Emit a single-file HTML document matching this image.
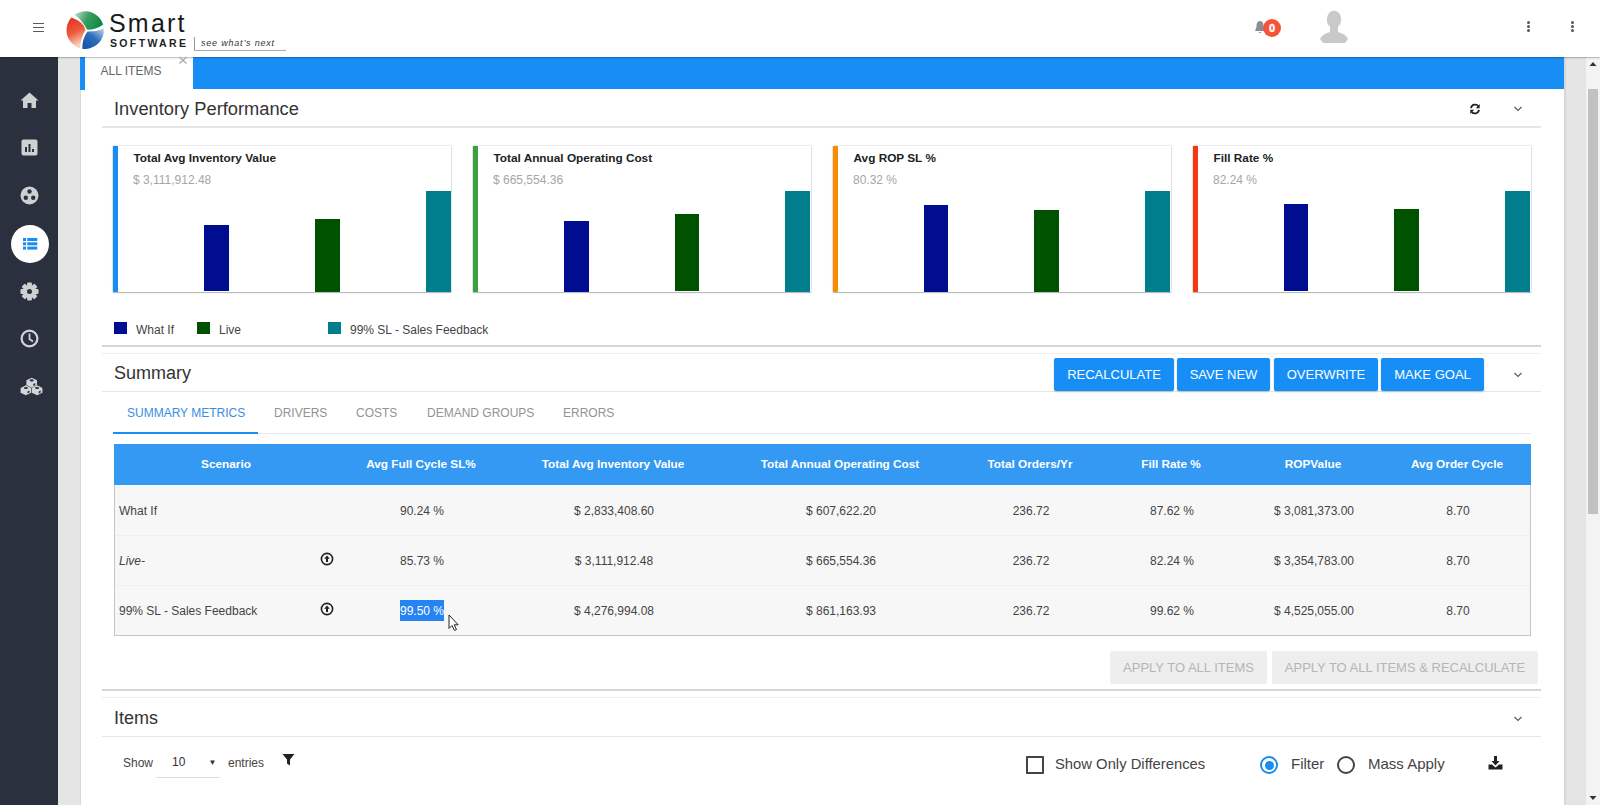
<!DOCTYPE html>
<html><head><meta charset="utf-8">
<style>
*{box-sizing:border-box;margin:0;padding:0}
html,body{width:1600px;height:805px;overflow:hidden;background:#fff;font-family:"Liberation Sans",sans-serif;color:#333}
.a{position:absolute}
#hdr{left:0;top:0;width:1600px;height:57px;background:#fff;box-shadow:0 0.5px 1.2px rgba(0,0,0,.28);z-index:5}
#side{left:0;top:57px;width:58px;height:748px;background:#2a303d}
#gut{left:58px;top:57px;width:22px;height:748px;background:#e5e5e5}
#gut2{left:1564px;top:57px;width:22px;height:748px;background:#e4e4e4;border-left:2px solid #d6d6d6}
#sb{left:1586px;top:57px;width:14px;height:748px;background:#f3f3f3}
#thumb{left:1588px;top:89px;width:10px;height:425px;background:#c1c1c1}
#panel{left:80px;top:57px;width:1484px;height:748px;background:#fff;border-left:1px solid #d8d8d8}
#tabbar{left:80px;top:57px;width:1484px;height:32.3px;background:#168ef6}
#tab{left:80px;top:57px;width:113px;height:33px;background:#fff;border-left:5px solid #168ef6}
.t{white-space:nowrap;line-height:1}
.hl{background:#e6e6e6;height:2px}
.card{top:146px;width:338px;height:146px;background:#fff;box-shadow:0 1px 1px rgba(0,0,0,.2),0 0 1.5px rgba(0,0,0,.32)}
.card .bd{left:0;top:0;width:4.6px;height:146px}
.card .ct{left:20.5px;top:6.5px;font-size:11.8px;font-weight:bold;color:#222}
.card .cv{left:20px;top:28px;font-size:12px;color:#a6a6a6}
.bar{width:24.5px}
.lg{top:322px;width:13px;height:12px}
.lgt{top:324px;font-size:12px;color:#444}
.btn{top:358px;height:33px;background:#168ef6;color:#fff;font-size:13px;border-radius:2px;text-align:center;line-height:33px;box-shadow:0 1px 2px rgba(0,0,0,.2)}
.tabt{top:407px;font-size:12px;color:#939393}
th,td{font-size:12px}
.hd{top:444px;height:41px;background:#3399f3}
.hdt{top:458.5px;font-size:11.8px;font-weight:bold;color:#fff;transform:translateX(-50%)}
.row{left:114px;width:1417px;height:50px;background:#f7f7f7}
.cell{font-size:12px;color:#444;transform:translateX(-50%)}
.abtn{top:651px;height:33px;background:#eeeeee;color:#b5b5b5;font-size:13px;line-height:33px;text-align:center;border-radius:2px}
</style></head><body>
<div id="side" class="a">
 <svg class="a" style="left:20px;top:35px" width="19" height="17" viewBox="0 0 19 17"><path d="M9.5,0.5 L18.5,8.5 L16,8.5 L16,16 L11.5,16 L11.5,11 L7.5,11 L7.5,16 L3,16 L3,8.5 L0.5,8.5 Z" fill="#cfd0d2"/></svg>
 <svg class="a" style="left:21px;top:82px" width="17" height="17" viewBox="0 0 17 17"><rect x="0.5" y="0.5" width="16" height="16" rx="2" fill="#cfd0d2"/><rect x="4" y="8" width="2" height="5" fill="#2a303d"/><rect x="7.5" y="5" width="2" height="8" fill="#2a303d"/><rect x="11" y="10" width="2" height="3" fill="#2a303d"/></svg>
 <svg class="a" style="left:20px;top:129px" width="19" height="19" viewBox="0 0 19 19"><circle cx="9.5" cy="9.5" r="9" fill="#cfd0d2"/><circle cx="9.5" cy="5.5" r="2.2" fill="#2a303d"/><circle cx="5.8" cy="11.8" r="2.2" fill="#2a303d"/><circle cx="13.2" cy="11.8" r="2.2" fill="#2a303d"/></svg>
 <div class="a" style="left:10.5px;top:168px;width:38px;height:38px;border-radius:50%;background:#fff"></div>
 <svg class="a" style="left:23px;top:180.5px" width="15" height="12" viewBox="0 0 15 12"><g fill="#1a8cf0"><rect x="0" y="0" width="3" height="3"/><rect x="4.3" y="0" width="10" height="3"/><rect x="0" y="4.3" width="3" height="3"/><rect x="4.3" y="4.3" width="10" height="3"/><rect x="0" y="8.6" width="3" height="3"/><rect x="4.3" y="8.6" width="10" height="3"/></g></svg>
 <svg class="a" style="left:20px;top:225px" width="19" height="19" viewBox="-9.5 -9.5 19 19"><g fill="#cfd0d2"><circle r="6.5"/><rect x="-2.4" y="-9" width="4.8" height="18" rx="1"/><rect x="-2.4" y="-9" width="4.8" height="18" rx="1" transform="rotate(45)"/><rect x="-2.4" y="-9" width="4.8" height="18" rx="1" transform="rotate(90)"/><rect x="-2.4" y="-9" width="4.8" height="18" rx="1" transform="rotate(135)"/></g><circle r="2.5" fill="#2a303d"/></svg>
 <svg class="a" style="left:20px;top:272px" width="19" height="19" viewBox="0 0 19 19"><circle cx="9.5" cy="9.5" r="7.9" fill="none" stroke="#d4d5d8" stroke-width="2.2"/><path d="M9.5,4.5 L9.5,10 L13,12.5" fill="none" stroke="#cfd0d2" stroke-width="1.8"/></svg>
 <svg class="a" style="left:20px;top:320px" width="23" height="20" viewBox="20 377 23 20"><path d="M31.7,377.7 L37.0,380.3 L37.0,385.09999999999997 L31.7,387.7 L26.4,385.09999999999997 L26.4,380.3 Z" fill="#d4d5d8"/><ellipse cx="31.7" cy="380.4" rx="2.1" ry="1.1" fill="#2a303d"/><path d="M33.3,383.9 L35.3,382.9 L35.3,384.9 L33.3,385.9 Z" fill="#2a303d"/><path d="M25.9,385.3 L31.2,387.90000000000003 L31.2,392.7 L25.9,395.3 L20.599999999999998,392.7 L20.599999999999998,387.90000000000003 Z" fill="#d4d5d8"/><ellipse cx="25.9" cy="388.0" rx="2.1" ry="1.1" fill="#2a303d"/><path d="M27.5,391.5 L29.5,390.5 L29.5,392.5 L27.5,393.5 Z" fill="#2a303d"/><path d="M37.1,385.3 L42.4,387.90000000000003 L42.4,392.7 L37.1,395.3 L31.8,392.7 L31.8,387.90000000000003 Z" fill="#d4d5d8"/><ellipse cx="37.1" cy="388.0" rx="2.1" ry="1.1" fill="#2a303d"/><path d="M38.7,391.5 L40.7,390.5 L40.7,392.5 L38.7,393.5 Z" fill="#2a303d"/></svg>
</div>
<div id="gut" class="a"></div>
<div id="panel" class="a"></div>
<div id="gut2" class="a"></div>
<div id="sb" class="a"></div>
<div id="thumb" class="a"></div>
<div id="tabbar" class="a"></div>
<div id="tab" class="a"></div>
<div class="a t" style="left:100.5px;top:64.5px;font-size:12px;color:#666">ALL ITEMS</div>
<svg class="a" style="left:178px;top:56px;z-index:6" width="10" height="9" viewBox="0 0 10 9"><path d="M1.5,1 L8.5,7.5 M8.5,1 L1.5,7.5" stroke="#b0b0b0" stroke-width="1.6"/></svg>

<div id="hdr" class="a">
 <div class="a" style="left:33px;top:22.6px;width:10.5px;height:1.7px;background:#5a5a5a"></div>
 <div class="a" style="left:33px;top:26.6px;width:10.5px;height:1.7px;background:#5a5a5a"></div>
 <div class="a" style="left:33px;top:30.6px;width:10.5px;height:1.7px;background:#5a5a5a"></div>
 <svg class="a" style="left:60px;top:5px" width="50" height="50" viewBox="60 5 50 50">
  <defs>
   <linearGradient id="gr" x1="0" y1="0" x2="0.3" y2="1"><stop offset="0" stop-color="#e42a20"/><stop offset="0.55" stop-color="#ec5a3a"/><stop offset="1" stop-color="#fbd0bd"/></linearGradient>
   <linearGradient id="gg" x1="0" y1="0" x2="1" y2="0.3"><stop offset="0" stop-color="#c9dccf"/><stop offset="0.5" stop-color="#3c9f63"/><stop offset="1" stop-color="#0f8a45"/></linearGradient>
   <linearGradient id="gb" x1="0.2" y1="1" x2="1" y2="0"><stop offset="0" stop-color="#1655a8"/><stop offset="0.5" stop-color="#2f6dbd"/><stop offset="1" stop-color="#c5d6ee"/></linearGradient>
  </defs>
  <path d="M71.5,17.5 Q84,22 85.5,30 Q80,39 80.5,48.3 A18.7,18.7 0 0 1 71.5,17.5 Z" fill="url(#gr)"/>
  <path d="M74.5,14.8 A18.7,18.7 0 0 1 103.2,24.5 Q95,30.5 87,29.5 Q82,20 74.5,14.8 Z" fill="url(#gg)"/>
  <path d="M103.8,28.5 A18.7,18.7 0 0 1 82.3,48.7 Q82,39 87.5,31.5 Q96,32 103.8,28.5 Z" fill="url(#gb)"/>
 </svg>
 <div class="a t" style="left:109px;top:11px;font-size:25px;letter-spacing:2.2px;color:#1a1a1a">Smart</div>
 <div class="a t" style="left:110px;top:38px;font-size:10.5px;font-weight:bold;letter-spacing:2.35px;color:#222">SOFTWARE</div>
 <div class="a" style="left:194px;top:37px;width:1px;height:14px;background:#999"></div>
 <div class="a" style="left:194px;top:50px;width:92px;height:1px;background:#aaa"></div>
 <div class="a t" style="left:201px;top:39px;font-size:9px;font-style:italic;letter-spacing:0.8px;color:#333">see what’s next</div>
 <svg class="a" style="left:1254px;top:20px" width="12" height="14" viewBox="0 0 12 14"><path d="M6,1 C3,1 2.5,4 2.5,7 L1,11 L11,11 L9.5,7 C9.5,4 9,1 6,1 Z M4.5,12 Q6,14 7.5,12 Z" fill="#8a8f96"/></svg>
 <div class="a" style="left:1263px;top:19px;width:18px;height:18px;border-radius:50%;background:#f4553a;color:#fff;font-size:11px;font-weight:bold;-webkit-text-stroke:0.4px #fff;text-align:center;line-height:18px">0</div>
 <svg class="a" style="left:1318px;top:10px" width="32" height="35" viewBox="0 0 32 35"><ellipse cx="16" cy="9.5" rx="7.2" ry="9" fill="#c9c9c9"/><path d="M12,17 L12,22 Q4,24 2,29 L5,33 L27,33 L30,29 Q28,24 20,22 L20,17 Z" fill="#c9c9c9"/></svg>
 <div class="a" style="left:1527px;top:21px;width:3px;height:3px;border-radius:50%;background:#555"></div>
 <div class="a" style="left:1527px;top:25px;width:3px;height:3px;border-radius:50%;background:#555"></div>
 <div class="a" style="left:1527px;top:29px;width:3px;height:3px;border-radius:50%;background:#555"></div>
 <div class="a" style="left:1571px;top:21px;width:3px;height:3px;border-radius:50%;background:#555"></div>
 <div class="a" style="left:1571px;top:25px;width:3px;height:3px;border-radius:50%;background:#555"></div>
 <div class="a" style="left:1571px;top:29px;width:3px;height:3px;border-radius:50%;background:#555"></div>
</div>

<!-- Inventory performance -->
<div class="a t" style="left:114px;top:99.8px;font-size:18.3px;color:#333">Inventory Performance</div>
<div class="a hl" style="left:102px;top:126px;width:1439px"></div>

<div class="a card" style="left:113px"><div class="a bd" style="background:#188df3"></div>
 <div class="a t ct">Total Avg Inventory Value</div><div class="a t cv">$ 3,111,912.48</div>
 <div class="a bar" style="left:91.3px;top:78.7px;height:66.8px;background:#000d91"></div>
 <div class="a bar" style="left:202.2px;top:72.5px;height:73.0px;background:#005100"></div>
 <div class="a bar" style="left:313.2px;top:45px;height:100.5px;background:#007e8d"></div>
</div>
<div class="a card" style="left:473px"><div class="a bd" style="background:#3c9f40"></div>
 <div class="a t ct">Total Annual Operating Cost</div><div class="a t cv">$ 665,554.36</div>
 <div class="a bar" style="left:91.3px;top:75px;height:70.5px;background:#000d91"></div>
 <div class="a bar" style="left:201.9px;top:67.7px;height:77.8px;background:#005100"></div>
 <div class="a bar" style="left:312.4px;top:45px;height:100.5px;background:#007e8d"></div>
</div>
<div class="a card" style="left:833px"><div class="a bd" style="background:#fb8c00"></div>
 <div class="a t ct">Avg ROP SL %</div><div class="a t cv">80.32 %</div>
 <div class="a bar" style="left:90.5px;top:58.5px;height:87.0px;background:#000d91"></div>
 <div class="a bar" style="left:201.4px;top:64px;height:81.5px;background:#005100"></div>
 <div class="a bar" style="left:312.4px;top:45px;height:100.5px;background:#007e8d"></div>
</div>
<div class="a card" style="left:1193px"><div class="a bd" style="background:#f5360f"></div>
 <div class="a t ct">Fill Rate %</div><div class="a t cv">82.24 %</div>
 <div class="a bar" style="left:90.5px;top:57.6px;height:87.9px;background:#000d91"></div>
 <div class="a bar" style="left:201.4px;top:63.2px;height:82.3px;background:#005100"></div>
 <div class="a bar" style="left:312.4px;top:45px;height:100.5px;background:#007e8d"></div>
</div>

<div class="a lg" style="left:114px;background:#000f91"></div><div class="a t lgt" style="left:136px">What If</div>
<div class="a lg" style="left:197px;background:#005000"></div><div class="a t lgt" style="left:219px">Live</div>
<div class="a lg" style="left:328px;background:#007e8e"></div><div class="a t lgt" style="left:350px">99% SL - Sales Feedback</div>
<div class="a" style="left:102px;top:345px;width:1439px;height:2px;background:#d6d6d6"></div>

<div class="a" style="left:102px;top:353px;width:1439px;height:1px;background:#efefef"></div>
<!-- Summary -->
<div class="a t" style="left:114px;top:364px;font-size:18px;color:#333">Summary</div>
<div class="a hl" style="left:102px;top:391px;width:1439px;height:1px"></div>
<div class="a btn t" style="left:1054px;width:120px">RECALCULATE</div>
<div class="a btn t" style="left:1177px;width:93px">SAVE NEW</div>
<div class="a btn t" style="left:1274px;width:104px">OVERWRITE</div>
<div class="a btn t" style="left:1381px;width:103px">MAKE GOAL</div>

<div class="a t tabt" style="left:127px;color:#3a8ee0">SUMMARY METRICS</div>
<div class="a t tabt" style="left:274px">DRIVERS</div>
<div class="a t tabt" style="left:356px">COSTS</div>
<div class="a t tabt" style="left:427px">DEMAND GROUPS</div>
<div class="a t tabt" style="left:563px">ERRORS</div>
<div class="a" style="left:113px;top:433px;width:1418px;height:1px;background:#e6e6e6"></div>
<div class="a" style="left:113px;top:432px;width:145px;height:2px;background:#188df3"></div>

<!-- table -->
<div class="a" style="left:114px;top:444px;width:1417px;height:192px;border:1px solid #c4c4c4;background:#f7f7f7"></div>
<div class="a hd" style="left:114px;width:1417px"></div>
<div class="a" style="left:115px;top:535px;width:1415px;height:1px;background:#efefef"></div>
<div class="a" style="left:115px;top:585px;width:1415px;height:1px;background:#efefef"></div>
<div class="a t hdt" style="left:226px">Scenario</div>
<div class="a t hdt" style="left:421px">Avg Full Cycle SL%</div>
<div class="a t hdt" style="left:613px">Total Avg Inventory Value</div>
<div class="a t hdt" style="left:840px">Total Annual Operating Cost</div>
<div class="a t hdt" style="left:1030px">Total Orders/Yr</div>
<div class="a t hdt" style="left:1171px">Fill Rate %</div>
<div class="a t hdt" style="left:1313px">ROPValue</div>
<div class="a t hdt" style="left:1457px">Avg Order Cycle</div>

<div class="a t" style="left:119px;top:504.6px;font-size:12px;color:#444">What If</div>
<div class="a t" style="left:119px;top:554.6px;font-size:12px;color:#444;font-style:italic">Live-</div>
<div class="a t" style="left:119px;top:604.6px;font-size:12px;color:#444">99% SL - Sales Feedback</div>

<div class="a t cell" style="left:422px;top:504.6px">90.24 %</div>
<div class="a t cell" style="left:614px;top:504.6px">$ 2,833,408.60</div>
<div class="a t cell" style="left:841px;top:504.6px">$ 607,622.20</div>
<div class="a t cell" style="left:1031px;top:504.6px">236.72</div>
<div class="a t cell" style="left:1172px;top:504.6px">87.62 %</div>
<div class="a t cell" style="left:1314px;top:504.6px">$ 3,081,373.00</div>
<div class="a t cell" style="left:1458px;top:504.6px">8.70</div>

<div class="a t cell" style="left:422px;top:554.6px">85.73 %</div>
<div class="a t cell" style="left:614px;top:554.6px">$ 3,111,912.48</div>
<div class="a t cell" style="left:841px;top:554.6px">$ 665,554.36</div>
<div class="a t cell" style="left:1031px;top:554.6px">236.72</div>
<div class="a t cell" style="left:1172px;top:554.6px">82.24 %</div>
<div class="a t cell" style="left:1314px;top:554.6px">$ 3,354,783.00</div>
<div class="a t cell" style="left:1458px;top:554.6px">8.70</div>

<div class="a" style="left:400px;top:600px;width:44px;height:21px;background:#2683f2"></div>
<div class="a t cell" style="left:422px;top:604.6px;color:#fff">99.50 %</div>
<div class="a t cell" style="left:614px;top:604.6px">$ 4,276,994.08</div>
<div class="a t cell" style="left:841px;top:604.6px">$ 861,163.93</div>
<div class="a t cell" style="left:1031px;top:604.6px">236.72</div>
<div class="a t cell" style="left:1172px;top:604.6px">99.62 %</div>
<div class="a t cell" style="left:1314px;top:604.6px">$ 4,525,055.00</div>
<div class="a t cell" style="left:1458px;top:604.6px">8.70</div>

<div class="a abtn t" style="left:1110px;width:157px">APPLY TO ALL ITEMS</div>
<div class="a abtn t" style="left:1272px;width:266px">APPLY TO ALL ITEMS &amp; RECALCULATE</div>
<div class="a" style="left:102px;top:689px;width:1439px;height:2px;background:#d6d6d6"></div>

<div class="a" style="left:102px;top:697px;width:1439px;height:1px;background:#efefef"></div>
<!-- Items -->
<div class="a t" style="left:114px;top:709px;font-size:18px;color:#333">Items</div>
<div class="a hl" style="left:102px;top:736px;width:1439px;height:1px"></div>
<div class="a t" style="left:123px;top:757px;font-size:12px;color:#444">Show</div>
<div class="a t" style="left:172px;top:756px;font-size:12px;color:#333">10</div>
<div class="a t" style="left:208.5px;top:758.5px;font-size:8px;color:#333">▼</div>
<div class="a" style="left:156px;top:777px;width:64px;height:1px;background:#ddd"></div>
<div class="a t" style="left:228px;top:757px;font-size:12px;color:#444">entries</div>

<div class="a" style="left:1026px;top:756px;width:18px;height:18px;border:2px solid #444;border-radius:1px"></div>
<div class="a t" style="left:1055px;top:757px;font-size:14.8px;color:#444">Show Only Differences</div>
<div class="a" style="left:1260px;top:756px;width:18px;height:18px;border:2px solid #1a8cf0;border-radius:50%"></div>
<div class="a" style="left:1264.5px;top:760.5px;width:9px;height:9px;background:#1a8cf0;border-radius:50%"></div>
<div class="a t" style="left:1291px;top:756px;font-size:15px;color:#444">Filter</div>
<div class="a" style="left:1337px;top:756px;width:18px;height:18px;border:2px solid #444;border-radius:50%"></div>
<div class="a t" style="left:1368px;top:756px;font-size:15px;color:#444">Mass Apply</div>


<!-- icons -->
<svg class="a" style="left:1469.3px;top:102.5px" width="12" height="12" viewBox="0 0 13 13"><path d="M2.2,5.5 A4.4,4.4 0 0 1 10.2,3.6" fill="none" stroke="#222" stroke-width="1.9"/><path d="M11.6,1.2 L11.6,5.6 L7.4,5.6 Z" fill="#222"/><path d="M10.8,7.5 A4.4,4.4 0 0 1 2.8,9.4" fill="none" stroke="#222" stroke-width="1.9"/><path d="M1.4,11.8 L1.4,7.4 L5.6,7.4 Z" fill="#222"/></svg>
<svg class="a" style="left:1513px;top:105px" width="10" height="8" viewBox="0 0 10 8"><path d="M1.5,2 L5,5.5 L8.5,2" fill="none" stroke="#5a5a5a" stroke-width="1.15"/></svg>
<svg class="a" style="left:1513px;top:371px" width="10" height="8" viewBox="0 0 10 8"><path d="M1.5,2 L5,5.5 L8.5,2" fill="none" stroke="#5a5a5a" stroke-width="1.15"/></svg>
<svg class="a" style="left:1513px;top:715px" width="10" height="8" viewBox="0 0 10 8"><path d="M1.5,2 L5,5.5 L8.5,2" fill="none" stroke="#5a5a5a" stroke-width="1.15"/></svg>
<svg class="a" style="left:1589px;top:61px" width="8" height="6" viewBox="0 0 8 6"><path d="M0.5,5 L4,1 L7.5,5 Z" fill="#333"/></svg>
<svg class="a" style="left:1589px;top:795px" width="8" height="6" viewBox="0 0 8 6"><path d="M0.5,1 L4,5 L7.5,1 Z" fill="#333"/></svg>
<svg class="a" style="left:320px;top:552px" width="14" height="14" viewBox="0 0 14 14"><circle cx="7" cy="7" r="5.6" fill="none" stroke="#222" stroke-width="1.6"/><path d="M7,3.6 L9.8,6.8 L8,6.8 L8,10 L6,10 L6,6.8 L4.2,6.8 Z" fill="#222"/></svg>
<svg class="a" style="left:320px;top:602px" width="14" height="14" viewBox="0 0 14 14"><circle cx="7" cy="7" r="5.6" fill="none" stroke="#222" stroke-width="1.6"/><path d="M7,3.6 L9.8,6.8 L8,6.8 L8,10 L6,10 L6,6.8 L4.2,6.8 Z" fill="#222"/></svg>
<svg class="a" style="left:448px;top:614px" width="12" height="18" viewBox="0 0 12 18"><path d="M1,1 L1,14.5 L4,11.5 L6.5,16.5 L8.5,15.5 L6.2,10.8 L10.2,10.8 Z" fill="#fff" stroke="#222" stroke-width="1" stroke-linejoin="round"/></svg>
<svg class="a" style="left:282px;top:753px" width="13" height="14" viewBox="0 0 13 14"><path d="M0.5,1 L12.5,1 L8,6.5 L8,12.5 L5,10.5 L5,6.5 Z" fill="#222"/></svg>
<svg class="a" style="left:1487px;top:755px" width="17" height="16" viewBox="0 0 17 16"><path d="M7,1 L10,1 L10,6 L12.5,6 L8.5,10.5 L4.5,6 L7,6 Z" fill="#222"/><path d="M1.5,9.5 L5,9.5 L8.5,12.5 L12,9.5 L15.5,9.5 L15.5,14.5 L1.5,14.5 Z" fill="#222"/></svg>
</body></html>
